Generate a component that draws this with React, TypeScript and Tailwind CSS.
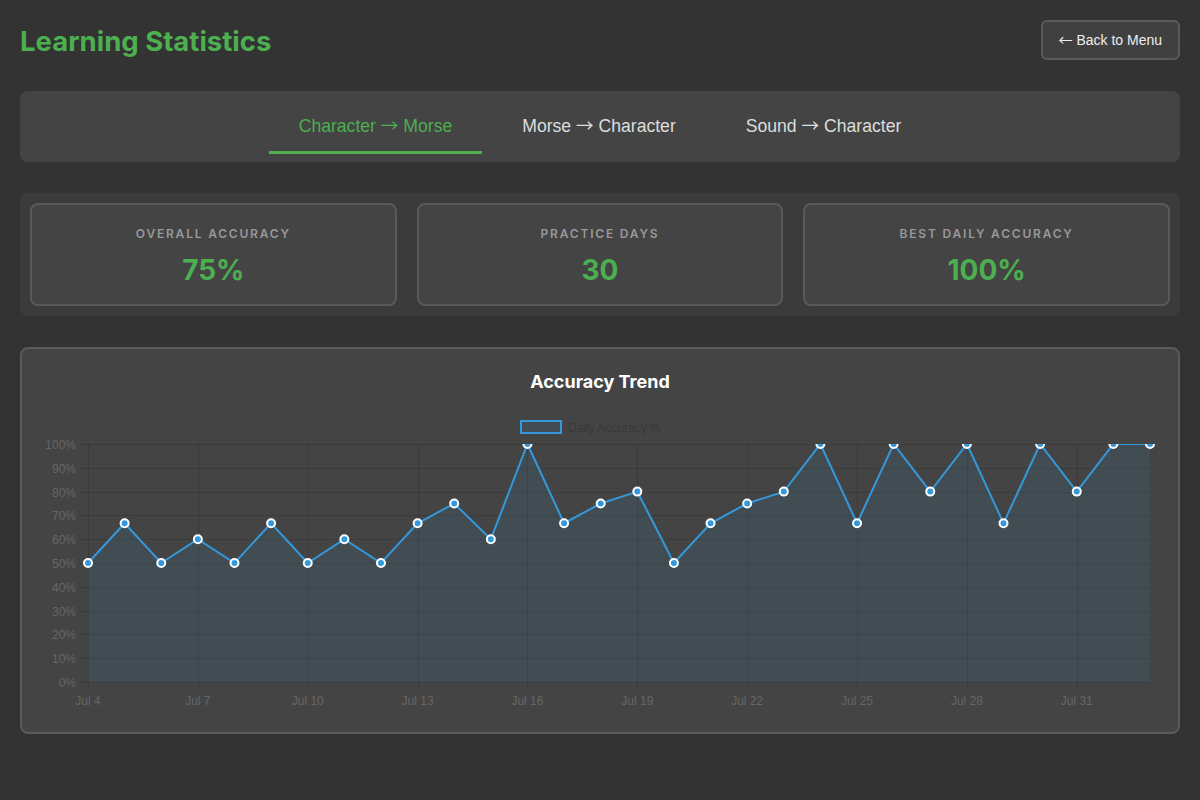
import React from "react";

const values = [50, 66.7, 50, 60, 50, 66.7, 50, 60, 50, 66.7, 75, 60, 100, 66.7, 75, 80, 50, 66.7, 75, 80, 100, 66.7, 100, 80, 100, 66.7, 100, 80, 100, 100];

const labels = values.map((_, i) => {
  const d = new Date(2024, 6, 4 + i);
  return (d.getMonth() === 6 ? "Jul " : "Aug ") + d.getDate();
});

const X0 = 46;
const X1 = 1108;
const Y0 = 34;
const Y1 = 272;
const px = (i: number) => X0 + (i * (X1 - X0)) / (values.length - 1);
const py = (v: number) => Y1 - (v / 100) * (Y1 - Y0);

function Chart() {
  const pts = values.map((v, i) => [px(i), py(v)] as const);
  const line = pts.map((p, i) => (i === 0 ? "M" : "L") + p[0].toFixed(2) + " " + p[1].toFixed(2)).join(" ");
  const area = line + ` L${X1} ${Y1} L${X0} ${Y1} Z`;
  const grid = "rgba(0,0,0,0.12)";
  const font = '"Liberation Sans", Arial, sans-serif';
  return (
    <svg width="1116" height="300" viewBox="0 0 1116 300" className="block">
      <defs>
        <clipPath id="plotclip">
          <rect x="0" y={Y0} width="1116" height="280" />
        </clipPath>
      </defs>
      <rect x="479" y="11" width="40" height="12" fill="rgba(52,152,219,0.1)" stroke="#3498db" strokeWidth="2" />
      <text x="526" y="21.5" fontSize="12" fill="#383838" fontFamily={font}>
        Daily Accuracy %
      </text>
      {Array.from({ length: 11 }).map((_, k) => {
        const y = Math.round(py(k * 10)) + 0.5;
        return (
          <g key={k}>
            <line x1={X0 - 8} x2={X1} y1={y} y2={y} stroke={grid} strokeWidth="1" />
            <text x="34" y={y + 4} fontSize="12" textAnchor="end" fill="#666" fontFamily={font}>
              {k * 10}%
            </text>
          </g>
        );
      })}
      {values.map((_, i) =>
        i % 3 === 0 ? (
          <g key={i}>
            <line x1={Math.round(px(i)) + 0.5} x2={Math.round(px(i)) + 0.5} y1={Y0} y2={Y1 + 8} stroke={grid} strokeWidth="1" />
            <text x={px(i)} y="295" fontSize="12" textAnchor="middle" fill="#666" fontFamily={font}>
              {labels[i]}
            </text>
          </g>
        ) : null
      )}
      <g clipPath="url(#plotclip)">
        <path d={area} fill="rgba(52,152,219,0.1)" />
        <path d={line} fill="none" stroke="#3498db" strokeWidth="2" strokeLinejoin="miter" />
        {pts.map((p, i) => (
          <circle key={i} cx={p[0]} cy={p[1]} r="4" fill="#3498db" stroke="#ffffff" strokeWidth="2" />
        ))}
      </g>
    </svg>
  );
}

function StatCard({ label, value }: { label: string; value: string }) {
  return (
    <div className="flex flex-col items-center rounded-lg border-2 border-[#5a5a5a] bg-[#444444] pt-[22px] pb-[17px]">
      <div className="text-[12px] leading-[14px] font-semibold uppercase tracking-[1.8px] text-[#999999]">{label}</div>
      <div className="mt-3 text-[28px] leading-[34px] font-bold text-[#4caf50]">{value}</div>
    </div>
  );
}

function Arrow({ ch }: { ch: string }) {
  return <span className="font-['Noto_Sans_CJK_SC',_sans-serif] leading-none">{ch}</span>;
}

export default function App() {
  const tabs: [string, string][] = [
    ["Character", "Morse"],
    ["Morse", "Character"],
    ["Sound", "Character"],
  ];
  return (
    <div className="min-h-screen bg-[#333333] p-5 font-['Inter',_'Noto_Sans',_sans-serif] text-white">
      <div className="flex flex-col gap-[31px]">
        <div className="flex h-10 items-center justify-between">
          <h1 className="mt-[4px] text-[27.5px] font-bold text-[#4caf50]">Learning Statistics</h1>
          <button className="h-10 rounded-md border-2 border-[#5a5a5a] bg-[#404040] px-4 font-['Liberation_Sans',_Arial,_sans-serif] text-[14px] leading-[16px] text-[#eeeeee]">
            <Arrow ch="←" /> Back to Menu
          </button>
        </div>

        <div className="flex justify-center gap-[10px] rounded-lg bg-[#444444] px-[10px] pt-[10px] pb-[8px]">
          {tabs.map(([a, b], i) => (
            <button
              key={a}
              className={
                "h-[53px] border-b-[3px] px-[30px] py-[15px] font-['Liberation_Sans',_Arial,_sans-serif] text-[17.6px] leading-[20px] " +
                (i === 0 ? "border-[#4caf50] text-[#4caf50]" : "border-transparent text-[#dddddd]")
              }
            >
              {a} <Arrow ch="→" /> {b}
            </button>
          ))}
        </div>

        <div className="grid grid-cols-3 gap-5 rounded-lg bg-[#3b3b3b] p-[10px]">
          <StatCard label="Overall Accuracy" value="75%" />
          <StatCard label="Practice Days" value="30" />
          <StatCard label="Best Daily Accuracy" value="100%" />
        </div>

        <div className="rounded-lg border-2 border-[#5a5a5a] bg-[#444444] px-5 pt-[21px] pb-[22px]">
          <h2 className="text-center text-[18px] leading-6 font-bold text-white">Accuracy Trend</h2>
          <div className="mt-[16px]">
            <Chart />
          </div>
        </div>
      </div>
    </div>
  );
}
